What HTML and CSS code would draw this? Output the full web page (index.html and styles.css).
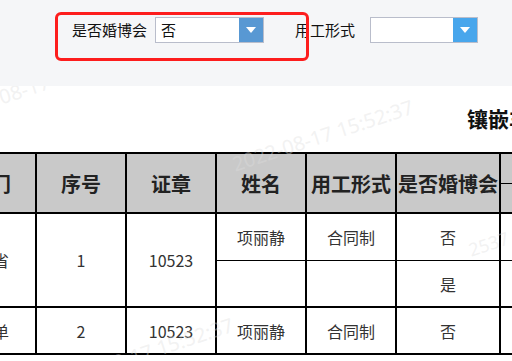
FILE: index.html
```html
<!DOCTYPE html>
<html lang="zh-CN">
<head>
<meta charset="utf-8">
<title>镶嵌</title>
<link rel="stylesheet" href="styles.css">
</head>
<body>
<div class="filters">
  <div class="field field-first">
    <span class="label">是否婚博会</span>
    <div class="select select-active">
      <span class="value">否</span>
      <span class="btn"><i class="caret"></i></span>
    </div>
  </div>
  <div class="field field-second">
    <span class="label">用工形式</span>
    <div class="select select-wide">
      <span class="value"></span>
      <span class="btn btn-light"><i class="caret"></i></span>
    </div>
  </div>
  <div class="highlight"></div>
</div>
<div class="report">
  <div class="title">镶嵌车间员工信息登记表</div>
  <table class="grid">
    <colgroup>
      <col class="c90"><col class="c90"><col class="c90"><col class="c90"><col class="c90"><col class="c104"><col class="c100"><col class="c100">
    </colgroup>
    <thead>
      <tr class="h1">
        <th rowspan="2">部门</th>
        <th rowspan="2">序号</th>
        <th rowspan="2">证章</th>
        <th rowspan="2">姓名</th>
        <th rowspan="2">用工形式</th>
        <th rowspan="2">是否婚博会</th>
        <th colspan="2" class="thin-bottom">其他信息</th>
      </tr>
      <tr class="h2">
        <th></th>
        <th></th>
      </tr>
    </thead>
    <tbody>
      <tr class="r">
        <td rowspan="2" class="first">浙江省</td>
        <td rowspan="2">1</td>
        <td rowspan="2">10523</td>
        <td class="thin-bottom">项丽静</td>
        <td class="thin-bottom">合同制</td>
        <td class="thin-bottom">否</td>
        <td class="thin-bottom"></td>
        <td class="thin-bottom"></td>
      </tr>
      <tr class="r">
        <td></td>
        <td></td>
        <td>是</td>
        <td></td>
        <td></td>
      </tr>
      <tr class="r">
        <td class="first">派遣单</td>
        <td>2</td>
        <td>10523</td>
        <td>项丽静</td>
        <td>合同制</td>
        <td>否</td>
        <td></td>
        <td></td>
      </tr>
    </tbody>
  </table>
  <span class="wm wm1">2022-08-17 15:52:37</span>
  <span class="wm wm2">2022-08-17 15:52:37</span>
  <span class="wm wm3">2022-08-17 15:52:37</span>
  <span class="wm wm4">2537</span>
</div>
</body>
</html>
```
FILE: styles.css
```css
html, body {
  margin: 0;
  padding: 0;
  overflow: hidden;
  background: #fff;
}
body {
  font-family: "Noto Sans CJK SC", "Noto Sans", sans-serif;
  color: #222;
}
.filters {
  position: relative;
  z-index: 2;
  height: 86px;
  background: #f5f6f8;
  display: flex;
  align-items: flex-start;
  padding-top: 17px;
  box-sizing: border-box;
}
.field {
  display: flex;
  align-items: center;
  height: 26px;
}
.field-first {
  padding-left: 72px;
}
.field-second {
  margin-left: 31px;
}
.label {
  font-size: 15px;
  line-height: 26px;
  color: #111;
  margin-right: 8px;
  white-space: nowrap;
}
.field-second .label {
  margin-right: 15px;
}
.select {
  width: 109px;
  height: 26px;
  box-sizing: border-box;
  border: 1px solid #b9bdcb;
  background: #fff;
  display: flex;
}
.select-wide {
  width: 108px;
}
.value {
  flex: 1;
  padding-left: 5px;
  font-size: 15px;
  line-height: 24px;
  color: #111;
}
.btn {
  width: 24px;
  height: 24px;
  background: #5898d3;
  display: flex;
  align-items: center;
  justify-content: center;
}
.btn-light {
  background: #48a6ec;
}
.caret {
  width: 0;
  height: 0;
  border-left: 5px solid transparent;
  border-right: 5px solid transparent;
  border-top: 6px solid #fff;
}
.highlight {
  position: absolute;
  left: 55px;
  top: 12px;
  width: 254px;
  height: 49px;
  box-sizing: border-box;
  border: 3px solid #fd1d1d;
  border-radius: 6px;
}
.report {
  position: relative;
  z-index: 1;
  padding-top: 17px;
}
.title {
  margin-left: 467px;
  font-size: 21px;
  line-height: 30px;
  font-weight: 700;
  color: #111;
  white-space: nowrap;
}
.grid {
  margin-top: 19px;
  margin-left: -55px;
  border-collapse: separate;
  border-spacing: 0;
  table-layout: fixed;
  width: 756px;
  border-top: 2px solid #000;
  border-left: 2px solid #000;
}
.c90 { width: 90px; }
.c104 { width: 104px; }
.c100 { width: 100px; }
.grid th, .grid td {
  border-right: 2px solid #000;
  border-bottom: 2px solid #000;
  padding: 0;
  text-align: center;
  vertical-align: middle;
  white-space: nowrap;
  overflow: hidden;
}
.grid th {
  background: #c9c9c9;
  font-size: 20px;
  font-weight: 700;
  color: #222;
}
.grid td {
  font-size: 16px;
  color: #333;
  background: #fff;
}
.grid .thin-bottom {
  border-bottom-width: 1px;
}
.grid td.first {
  padding-right: 12px;
}
.h1 { height: 26px; }
.h2 { height: 30px; }
.r { height: 47px; }
.wm {
  position: absolute;
  font-family: "Noto Sans", sans-serif;
  font-size: 20px;
  line-height: 20px;
  color: rgba(222, 222, 222, 0.4);
  white-space: nowrap;
  transform: rotate(-18deg);
  transform-origin: left center;
  pointer-events: none;
}
.wm1 { left: -50px; top: 18px; }
.wm2 { left: 233px; top: 69px; }
.wm3 { left: 53px; top: 287px; }
.wm4 { left: 469px; top: 154px; font-size: 18px; }
```
